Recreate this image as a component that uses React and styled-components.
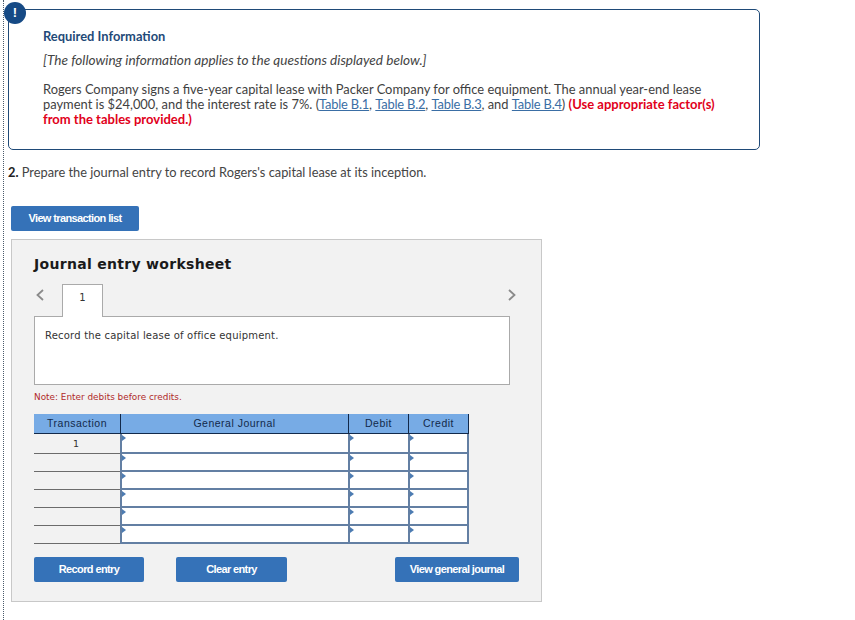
import React from "react";
import styled, { createGlobalStyle } from "styled-components";

const Global = createGlobalStyle`
  html, body { margin: 0; padding: 0; background: #fff; }
  body { font-family: Lato, "Open Sans", sans-serif; overflow: hidden; }
`;

const Page = styled.div`
  box-sizing: border-box;
  width: 855px;
  height: 620px;
  margin-left: 3px;
  border-left: 1px dotted #4a5a6a;
  padding: 9px 0 0 4px;
`;

const InfoBox = styled.section`
  position: relative;
  box-sizing: border-box;
  width: 752px;
  height: 141px;
  border: 1px solid #1f4a78;
  border-radius: 5px;
  padding: 18px 20px 0 34px;
  color: #3c3c3c;
`;

const Badge = styled.div`
  position: absolute;
  left: -5px;
  top: -8px;
  width: 22px;
  height: 22px;
  border-radius: 50%;
  background: #164a85;
  color: #fff;
  font: 700 13px/22px "Liberation Sans", sans-serif;
  text-align: center;
`;

const InfoTitle = styled.h3`
  margin: 0;
  font: 700 12.9px/16px Lato, sans-serif;
  color: #1f4a78;
`;

const InfoLead = styled.p`
  margin: 7px 0 0;
  font: italic 400 13.6px/18px Lato, sans-serif;
  color: #444;
`;

const InfoBody = styled.p`
  margin: 13px 0 0;
  font: 400 12.9px/15px Lato, sans-serif;
  color: #3f3f3f;
`;

const TableLink = styled.a`
  color: #3a6ea5;
  text-decoration: underline;
  letter-spacing: -0.2px;
`;

const Emphasis = styled.strong`
  color: #e1001a;
  font-weight: 700;
  font-size: 13px;
`;

const Question = styled.p`
  margin: 13px 0 0;
  height: 18px;
  font: 400 12.8px/18px Lato, sans-serif;
  color: #444;
  b { color: #222; font-weight: 700; }
`;

const Button = styled.button`
  box-sizing: border-box;
  width: ${(p) => p.$w}px;
  height: 25px;
  padding: 0;
  border: 0;
  border-radius: 2px;
  background: #3572b8;
  color: #fff;
  font: 700 11px/25px "Liberation Sans", Arial, sans-serif;
  letter-spacing: -0.62px;
`;

const TopAction = styled.div`
  margin: 25px 0 0 3px;
  height: 25px;
`;

const Panel = styled.section`
  box-sizing: border-box;
  width: 531px;
  height: 363px;
  margin: 8px 0 0 3px;
  background: #f2f2f2;
  border: 1px solid #c8c8c8;
  padding: 14px 0 0 22px;
`;

const PanelTitle = styled.h2`
  margin: 0;
  height: 20px;
  font: 700 14px/20px "DejaVu Sans", Verdana, sans-serif;
  color: #1a1a1a;
  letter-spacing: 0.3px;
`;

const TabRow = styled.div`
  display: flex;
  align-items: flex-start;
  width: 476px;
  height: 32px;
  margin-top: 10px;
`;

const Chevron = styled.svg`
  display: block;
  width: 10px;
  height: 14px;
  margin-top: 4px;
  flex: none;
`;

const ChevronLeftSlot = styled.div`
  margin-left: 1px;
  flex: none;
`;

const ChevronSlot = styled.div`
  flex: 1;
  display: flex;
  justify-content: flex-end;
  margin-right: -7px;
`;

const Tab = styled.div`
  box-sizing: border-box;
  width: 41px;
  height: 33px;
  margin-left: 17px;
  position: relative;
  z-index: 1;
  background: #fff;
  border: 1px solid #aaa;
  border-bottom: 0;
  text-align: center;
  font: 400 10px/26px "DejaVu Sans", Verdana, sans-serif;
  color: #333;
`;

const Prompt = styled.div`
  box-sizing: border-box;
  width: 476px;
  height: 69px;
  background: #fff;
  border: 1px solid #aaa;
  padding: 12px 10px;
  font: 400 10px/14px "DejaVu Sans", Verdana, sans-serif;
  letter-spacing: 0.2px;
  color: #333;
`;

const Note = styled.p`
  margin: 5px 0 0;
  height: 14px;
  font: 400 8.9px/14px "DejaVu Sans", Verdana, sans-serif;
  color: #b02a2a;
`;

const Grid = styled.div`
  display: grid;
  width: 435px;
  margin-top: 10px;
  grid-template-columns: 86px 228px 60px 61px;
`;

const Head = styled.div`
  box-sizing: border-box;
  height: 20px;
  background: #77abe5;
  border-bottom: 1px solid #12294a;
  border-left: ${(p) => (p.$first ? "0" : "1px solid #12294a")};
  border-right: ${(p) => (p.$last ? "1px solid #12294a" : "0")};
  text-align: center;
  font: 400 10.5px/19px "Liberation Sans", Arial, sans-serif;
  letter-spacing: 0.5px;
  color: #12294a;
`;

const RowLabel = styled.div`
  box-sizing: border-box;
  height: ${(p) => (p.$tall ? 20 : 18)}px;
  border-bottom: 1px solid #6c6c6c;
  text-align: center;
  padding-right: 2px;
  font: 400 9.5px/20px "DejaVu Sans", Verdana, sans-serif;
  color: #333;
`;

const Cell = styled.div`
  position: relative;
  box-sizing: border-box;
  height: ${(p) => (p.$tall ? 20 : 18)}px;
  background: #fff;
  border-left: 2px solid #637fa3;
  border-bottom: 2px solid #637fa3;
  border-right: ${(p) => (p.$last ? "2px solid #637fa3" : "0")};
  &::before {
    content: "";
    position: absolute;
    left: 0;
    top: 1px;
    border-left: 4px solid #4d7cb2;
    border-top: 3px solid transparent;
    border-bottom: 3px solid transparent;
  }
`;

const Actions = styled.div`
  display: flex;
  width: 485px;
  margin-top: 13px;
`;

const RightAction = styled.div`
  margin-left: auto;
`;

const ClearSlot = styled.div`
  margin-left: 32px;
`;

const ChevronIcon = ({ dir, color }) => (
  <Chevron viewBox="0 0 10 14" aria-hidden="true">
    <path
      d={dir === "left" ? "M8 2 L2.5 7 L8 12" : "M2 2 L7.5 7 L2 12"}
      fill="none"
      stroke={color}
      strokeWidth="1.8"
    />
  </Chevron>
);

const rows = [0, 1, 2, 3, 4, 5];

export default function App() {
  return (
    <>
      <Global />
      <Page>
        <InfoBox>
          <Badge>!</Badge>
          <InfoTitle>Required Information</InfoTitle>
          <InfoLead>[The following information applies to the questions displayed below.]</InfoLead>
          <InfoBody>
            Rogers Company signs a five-year capital lease with Packer Company for office equipment. The annual year-end lease
            <br />
            payment is $24,000, and the interest rate is 7%. (<TableLink>Table B.1</TableLink>, <TableLink>Table B.2</TableLink>,{" "}
            <TableLink>Table B.3</TableLink>, and <TableLink>Table B.4</TableLink>){" "}
            <Emphasis>
              (Use appropriate factor(s)
              <br />
              from the tables provided.)
            </Emphasis>
          </InfoBody>
        </InfoBox>
        <Question>
          <b>2.</b> Prepare the journal entry to record Rogers's capital lease at its inception.
        </Question>
        <TopAction>
          <Button $w={128}>View transaction list</Button>
        </TopAction>
        <Panel>
          <PanelTitle>Journal entry worksheet</PanelTitle>
          <TabRow>
            <ChevronLeftSlot>
              <ChevronIcon dir="left" color="#8a8a8a" />
            </ChevronLeftSlot>
            <Tab>1</Tab>
            <ChevronSlot>
              <ChevronIcon dir="right" color="#8a8a8a" />
            </ChevronSlot>
          </TabRow>
          <Prompt>Record the capital lease of office equipment.</Prompt>
          <Note>Note: Enter debits before credits.</Note>
          <Grid>
            <Head $first>Transaction</Head>
            <Head>General Journal</Head>
            <Head>Debit</Head>
            <Head $last>Credit</Head>
            {rows.map((r) => (
              <React.Fragment key={r}>
                <RowLabel $tall={r === 0}>{r === 0 ? "1" : ""}</RowLabel>
                <Cell $tall={r === 0} />
                <Cell $tall={r === 0} />
                <Cell $tall={r === 0} $last />
              </React.Fragment>
            ))}
          </Grid>
          <Actions>
            <Button $w={110}>Record entry</Button>
            <ClearSlot>
              <Button $w={111}>Clear entry</Button>
            </ClearSlot>
            <RightAction>
              <Button $w={124}>View general journal</Button>
            </RightAction>
          </Actions>
        </Panel>
      </Page>
    </>
  );
}
